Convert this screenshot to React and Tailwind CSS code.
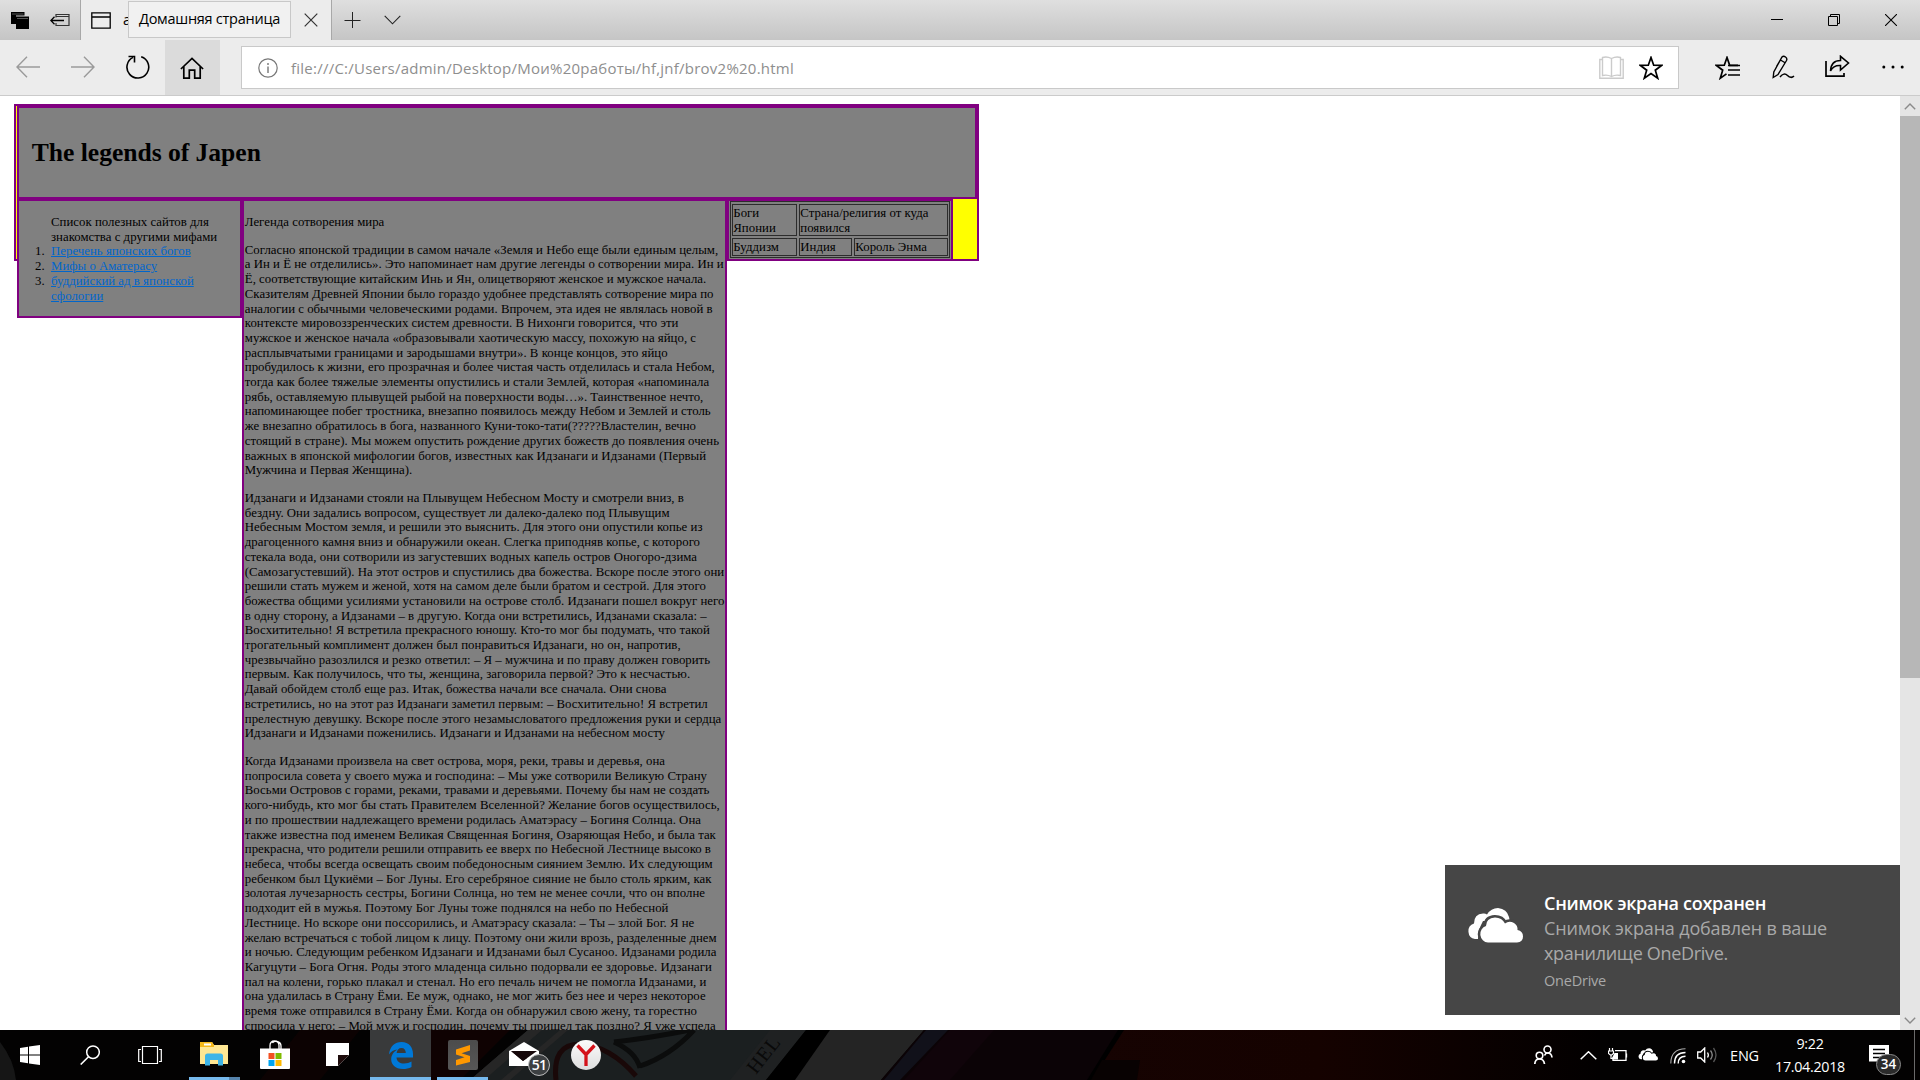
import React, { useLayoutEffect, useRef } from "react";

const UI = "font-['Open_Sans','Noto_Sans',sans-serif]";

/* Single line of text tracked so that it fills a given width. */
function Fit({ width, className = "", children }) {
  const ref = useRef(null);
  useLayoutEffect(() => {
    const el = ref.current;
    el.style.letterSpacing = "0px";
    const natural = el.getBoundingClientRect().width;
    el.style.letterSpacing = `${(width - natural) / el.textContent.length}px`;
  }, [width]);
  return (
    <span className={`block ${className}`}>
      <span ref={ref} className="inline-block whitespace-nowrap">{children}</span>
    </span>
  );
}

function Icon({ w, h, className = "", children }) {
  return (
    <svg width={w} height={h} viewBox={`0 0 ${w} ${h}`} fill="none" stroke="currentColor" strokeWidth="1.6" className={`block shrink-0 ${className}`}>
      {children}
    </svg>
  );
}

function TitleBar() {
  return (
    <div className="flex h-10 bg-linear-to-b from-[#dfdfdf] to-[#c5c5c5]">
      <div className="flex w-[81px] items-center border-r border-[#a8a8a8] pl-[11px]">
        <Icon w={18} h={18}>
          <path d="M0 1h13.500v3.500H5V13H0z" fill="#000" stroke="none" />
          <path d="M5 5.500h13V18H5z" fill="#000" stroke="none" />
          <path d="M6 7.500h11M1 3h11.500" stroke="#555" strokeWidth="1" />
        </Icon>
        <Icon w={20} h={14} className="ml-[21px]">
          <path d="M6 4.500V1.500h13V12.500H6V10" stroke="#333" strokeWidth="1.200" />
          <path d="M6 3.500h13" stroke="#333" strokeWidth="1" />
          <path d="M14 7.500H1M4.500 3.800L.8 7.500l3.700 3.700" strokeWidth="1.300" />
        </Icon>
      </div>
      <div className="relative flex w-[251px] items-center border-r border-[#a8a8a8] bg-[#ececec] pl-[10px]">
        <Icon w={20} h={17}>
          <path d="M.8.800h18.400v15.400H.8zM1 5h18" strokeWidth="1.300" />
        </Icon>
        <span className={`ml-3 text-[14.500px] ${UI}`}>а</span>
        <div className="absolute left-[47px] top-px flex h-[37px] w-[163px] items-center border border-[#c8c8c8] bg-[#f1f1f1] pl-[10px]">
          <Fit width={141} className={`-mt-px text-[14.500px] leading-5 text-black ${UI}`}>Домашняя страница</Fit>
        </div>
        <Icon w={14} h={14} className="ml-auto mr-[13px]">
          <path d="M.7.700l12.600 12.600M13.300.700L.7 13.300" stroke="#333" strokeWidth="1.200" />
        </Icon>
      </div>
      <Icon w={17} h={17} className="ml-3 mt-3">
        <path d="M8.500 0v16M.5 8.500h16" stroke="#222" strokeWidth="1" />
      </Icon>
      <Icon w={17} h={10} className="ml-[23px] mt-[15px]">
        <path d="M.7.800l7.800 8 7.800-8" stroke="#222" strokeWidth="1.100" />
      </Icon>
      <div className="ml-auto flex items-center pr-[23px]">
        <Icon w={12} h={12}><path d="M0 5.500h12" stroke="#000" strokeWidth="1" /></Icon>
        <Icon w={12} h={12} className="ml-[45px]"><path d="M.5 2.500h9v9h-9zM2.500 2.500v-2h9v9h-2" stroke="#000" strokeWidth="1" /></Icon>
        <Icon w={12} h={12} className="ml-[45px]"><path d="M0 0l12 12M12 0L0 12" stroke="#000" strokeWidth="1.100" /></Icon>
      </div>
    </div>
  );
}

const STAR = "M12 1.500l2.700 7.700 8.200.1-6.600 4.900 2.400 8L12 17.500l-6.700 4.700 2.400-8L1.100 9.300l8.200-.1z";

function ToolBar() {
  return (
    <div className="flex h-14 items-start border-b border-[#cbcbcb] bg-[#ececec] text-black">
      <Icon w={24} h={22} className="ml-4 mt-4 text-[#9a9a9a]">
        <path d="M11 .8L1 11l10 10.200M1 11h23" strokeWidth="1.400" />
      </Icon>
      <Icon w={24} h={22} className="ml-[31px] mt-4 text-[#9a9a9a]">
        <path d="M13 .8L23 11 13 21.200M23 11H0" strokeWidth="1.400" />
      </Icon>
      <Icon w={24} h={24} className="ml-[31px] mt-[15px]">
        <path d="M15.200 1.800A10.900 10.900 0 1 1 7 2.400" strokeWidth="1.600" />
        <path d="M2.500 1.500h6v6" strokeWidth="1.600" />
      </Icon>
      <div className="ml-[15px] flex h-[55px] w-[55px] bg-[#dbdbdb] pl-[15px] pt-[17px]">
        <Icon w={24} h={23}>
          <path d="M.9 12L12 1.500 23.100 12M3.800 9.500v11.700h5.500v-8h5.400v8h5.500V9.500" strokeWidth="1.700" />
        </Icon>
      </div>
      <div className="ml-[21px] mt-[6px] flex h-[43px] w-[1438px] items-center border border-[#c9c9c9] bg-white">
        <Icon w={20} h={20} className="ml-4 text-[#777]">
          <circle cx="10" cy="10" r="9.200" strokeWidth="1.200" />
          <path d="M10 8.500v6.500M10 5v2" strokeWidth="1.400" />
        </Icon>
        <Fit width={503} className={`ml-[13px] text-[15px] leading-5 text-[#8e8e8e] ${UI}`}>file:///C:/Users/admin/Desktop/Мои%20работы/hf,jnf/brov2%20.html</Fit>
        <Icon w={25} h={24} className="ml-auto text-[#cbcbcb]">
          <path d="M12.500 2.500Q8 .2 3.500 1.500v18q5-1.200 9 1 4-2.200 9-1v-18Q17 .2 12.500 2.500zM12.500 2.500v18.500M3.500 3.500H.8v18.700h23.400V3.500h-2.700" strokeWidth="1.400" />
        </Icon>
        <Icon w={24} h={24} className="ml-[15px] mr-[15px]"><path d={STAR} strokeWidth="1.700" /></Icon>
      </div>
      <Icon w={25} h={24} className="ml-9 mt-4">
        <path d="M23 9.300h-8.300L12 1.500l-2.700 7.700-8.200.1 6.600 4.900-2.400 8 6.200-4.300" strokeWidth="1.700" />
        <path d="M13 9.500h12M13 14h12M13 19h12" strokeWidth="1.600" />
      </Icon>
      <Icon w={23} h={24} className="ml-[32px] mt-[15px]">
        <path d="M1.200 22.500l.6-5.500L10 2q1.500-1.500 3.500 0t1 3.500L6 19.500z M8.500 5l5 3M4.500 11.500L9 4" strokeWidth="1.400" />
        <path d="M8 22q4-5 7.500-1.500T22 21" strokeWidth="1.500" />
      </Icon>
      <Icon w={25} h={23} className="ml-[30px] mt-[15px]">
        <path d="M1 6v15.200h18V18" strokeWidth="1.700" />
        <path d="M5.500 16Q6 5.500 15.500 5.500V1.300L23.500 8l-8 7v-4.500Q8.500 10 5.500 16z" strokeWidth="1.600" />
      </Icon>
      <Icon w={22} h={4} className="ml-[32px] mt-[25px]">
        <g fill="#000" stroke="none"><circle cx="1.800" cy="2" r="1.500" /><circle cx="11" cy="2" r="1.500" /><circle cx="20.200" cy="2" r="1.500" /></g>
      </Icon>
    </div>
  );
}

const STORY = [
  ["Легенда сотворения мира"],
  [
    "Согласно японской традиции в самом начале «Земля и Небо еще были единым целым,",
    "а Ин и Ё не отделились». Это напоминает нам другие легенды о сотворении мира. Ин и",
    "Ё, соответствующие китайским Инь и Ян, олицетворяют женское и мужское начала.",
    "Сказителям Древней Японии было гораздо удобнее представлять сотворение мира по",
    "аналогии с обычными человеческими родами. Впрочем, эта идея не являлась новой в",
    "контексте мировоззренческих систем древности. В Нихонги говорится, что эти",
    "мужское и женское начала «образовывали хаотическую массу, похожую на яйцо, с",
    "расплывчатыми границами и зародышами внутри». В конце концов, это яйцо",
    "пробудилось к жизни, его прозрачная и более чистая часть отделилась и стала Небом,",
    "тогда как более тяжелые элементы опустились и стали Землей, которая «напоминала",
    "рябь, оставляемую плывущей рыбой на поверхности воды…». Таинственное нечто,",
    "напоминающее побег тростника, внезапно появилось между Небом и Землей и столь",
    "же внезапно обратилось в бога, названного Куни-токо-тати(?????Властелин, вечно",
    "стоящий в стране). Мы можем опустить рождение других божеств до появления очень",
    "важных в японской мифологии богов, известных как Идзанаги и Идзанами (Первый",
    "Мужчина и Первая Женщина).",
  ],
  [
    "Идзанаги и Идзанами стояли на Плывущем Небесном Мосту и смотрели вниз, в",
    "бездну. Они задались вопросом, существует ли далеко-далеко под Плывущим",
    "Небесным Мостом земля, и решили это выяснить. Для этого они опустили копье из",
    "драгоценного камня вниз и обнаружили океан. Слегка приподняв копье, с которого",
    "стекала вода, они сотворили из загустевших водных капель остров Оногоро-дзима",
    "(Самозагустевший). На этот остров и спустились два божества. Вскоре после этого они",
    "решили стать мужем и женой, хотя на самом деле были братом и сестрой. Для этого",
    "божества общими усилиями установили на острове столб. Идзанаги пошел вокруг него",
    "в одну сторону, а Идзанами – в другую. Когда они встретились, Идзанами сказала: –",
    "Восхитительно! Я встретила прекрасного юношу. Кто-то мог бы подумать, что такой",
    "трогательный комплимент должен был понравиться Идзанаги, но он, напротив,",
    "чрезвычайно разозлился и резко ответил: – Я – мужчина и по праву должен говорить",
    "первым. Как получилось, что ты, женщина, заговорила первой? Это к несчастью.",
    "Давай обойдем столб еще раз. Итак, божества начали все сначала. Они снова",
    "встретились, но на этот раз Идзанаги заметил первым: – Восхитительно! Я встретил",
    "прелестную девушку. Вскоре после этого незамысловатого предложения руки и сердца",
    "Идзанаги и Идзанами поженились. Идзанаги и Идзанами на небесном мосту",
  ],
  [
    "Когда Идзанами произвела на свет острова, моря, реки, травы и деревья, она",
    "попросила совета у своего мужа и господина: – Мы уже сотворили Великую Страну",
    "Восьми Островов с горами, реками, травами и деревьями. Почему бы нам не создать",
    "кого-нибудь, кто мог бы стать Правителем Вселенной? Желание богов осуществилось,",
    "и по прошествии надлежащего времени родилась Аматэрасу – Богиня Солнца. Она",
    "также известна под именем Великая Священная Богиня, Озаряющая Небо, и была так",
    "прекрасна, что родители решили отправить ее вверх по Небесной Лестнице высоко в",
    "небеса, чтобы всегда освещать своим победоносным сиянием Землю. Их следующим",
    "ребенком был Цукиёми – Бог Луны. Его серебряное сияние не было столь ярким, как",
    "золотая лучезарность сестры, Богини Солнца, но тем не менее сочли, что он вполне",
    "подходит ей в мужья. Поэтому Бог Луны тоже поднялся на небо по Небесной",
    "Лестнице. Но вскоре они поссорились, и Аматэрасу сказала: – Ты – злой Бог. Я не",
    "желаю встречаться с тобой лицом к лицу. Поэтому они жили врозь, разделенные днем",
    "и ночью. Следующим ребенком Идзанаги и Идзанами был Сусаноо. Идзанами родила",
    "Кагуцути – Бога Огня. Роды этого младенца сильно подорвали ее здоровье. Идзанаги",
    "пал на колени, горько плакал и стенал. Но его печаль ничем не помогла Идзанами, и",
    "она удалилась в Страну Ёми. Ее муж, однако, не мог жить без нее и через некоторое",
    "время тоже отправился в Страну Ёми. Когда он обнаружил свою жену, та горестно",
    "спросила у него: – Мой муж и господин, почему ты пришел так поздно? Я уже успела",
  ],
];

const LINK = "text-[#0066cc] underline";

function Legends() {
  return (
    <div className="ml-[14px] mt-2 h-[157px] w-[965px] border-2 border-[#800080] bg-[#ffff00] pl-px font-['Liberation_Serif',serif] text-[12.800px] leading-[14.710px] tracking-[0.022px] text-black">
      <div className="h-[93px] w-[960px] border-2 border-[#800080] bg-[#808080] pl-[12.800px] pt-[30px]">
        <h1 className="text-[25.600px] font-bold leading-[30px] tracking-[-0.030px]">The legends of Japen</h1>
      </div>
      <div className="flex items-start">
        <div className="h-[119px] w-[225px] shrink-0 border-2 border-[#800080] bg-[#808080] pt-[14px]">
          <div className="pl-8">
            <div>Список полезных сайтов для</div>
            <div>знакомства с другими мифами</div>
          </div>
          <ol>
            <li className="flex"><span className="w-8 pl-4">1.</span><a className={LINK}>Перечень японских богов</a></li>
            <li className="flex"><span className="w-8 pl-4">2.</span><a className={LINK}>Мифы о Аматерасу</a></li>
            <li className="flex"><span className="w-8 pl-4">3.</span><a className={LINK}>буддийский ад в японской<br />сфологии</a></li>
          </ol>
        </div>
        <div className="h-[860px] w-[485px] shrink-0 border-2 border-[#800080] bg-[#808080] pl-[0.800px] pt-[0.800px]">
          {STORY.map((lines, i) => (
            <p key={i} className="mt-[13.100px]">
              {lines.map((line, j) => (
                <span key={j} className="block whitespace-nowrap">{line}</span>
              ))}
            </p>
          ))}
        </div>
        <div className="h-[62px] w-[226px] shrink-0 border-2 border-[#800080] bg-[#808080] pl-px">
          <div className="flex h-[57px] w-[220px] flex-col gap-[2px] border border-[#2c2c2c] pl-px pt-[2px]">
            <div className="flex gap-[2px]">
              <div className="h-8 w-[65px] border border-[#2c2c2c] pl-[0.300px] pt-px">Боги<br />Японии</div>
              <div className="h-8 w-[149px] border border-[#2c2c2c] pl-[0.300px] pt-px">Страна/религия от куда<br />появился</div>
            </div>
            <div className="flex gap-[2px]">
              <div className="h-[18px] w-[65px] border border-[#2c2c2c] pl-[0.300px] pt-px">Буддизм</div>
              <div className="h-[18px] w-[53px] border border-[#2c2c2c] pl-[0.300px] pt-px">Индия</div>
              <div className="h-[18px] w-[94px] border border-[#2c2c2c] pl-[0.300px] pt-px">Король Энма</div>
            </div>
          </div>
        </div>
      </div>
    </div>
  );
}

function Clouds({ w, h, gap }) {
  return (
    <svg width={w} height={h} viewBox="0 0 56 35" className="block shrink-0">
      <path d="M8 31A8 8 0 0 1 7 15.500Q7 6 16 5.500Q18 5 20 6.500Q24 0 31 0Q40 1 42 9Q43 12 42 13H16Q11 22 11 31z" fill="#fff" />
      <path d="M21 34.500a8.500 8.500 0 0 1-2-16.500Q19 10 28 9.500Q35 9.500 38 15.500Q42 12.500 47 15Q51 17.500 50.500 22Q56 23 56 28.500T50 34.500z" fill="#fff" stroke={gap} strokeWidth="5" paintOrder="stroke" />
    </svg>
  );
}

function Toast() {
  return (
    <div className={`absolute bottom-[15px] right-5 flex h-[150px] w-[455px] bg-[#464646] pl-[22px] ${UI}`}>
      <div className="pt-[43px]"><Clouds w={56} h={35} gap="#464646" /></div>
      <div className="ml-[21px] pt-[26px] text-[#a9a9a9]">
        <Fit width={222} className="text-[18px] font-semibold leading-[25px] text-white">Снимок экрана сохранен</Fit>
        <Fit width={283} className="text-[18px] leading-[25px]">Снимок экрана добавлен в ваше</Fit>
        <Fit width={184} className="text-[18px] leading-[25px]">хранилище OneDrive.</Fit>
        <Fit width={62} className="mt-1 text-[14.500px] leading-[22px]">OneDrive</Fit>
      </div>
    </div>
  );
}

function Wallpaper() {
  return (
    <svg width="1920" height="50" viewBox="0 0 1920 50" className="absolute inset-0">
      <defs>
        <linearGradient id="red" x1="0" x2="1">
          <stop offset="0" stopColor="#160302" />
          <stop offset=".45" stopColor="#150200" />
          <stop offset="1" stopColor="#020000" />
        </linearGradient>
      </defs>
      <path d="M0 0h1920v50H0z" fill="#030202" />
      <path d="M0 12Q14 30 16 50H0z" fill="#161616" />
      <path d="M300 0h60L320 50h-60z" fill="#0c0202" />
      <path d="M430 0h80L460 50h-60z" fill="#0f0202" />
      <path d="M528 0H806L766 50H470z" fill="#1b1f20" />
      <path d="M528 0h14L484 50h-14zM560 0h8L510 50h-9z" fill="#262626" />
      <path d="M556 50Q552 14 580 14Q610 16 636 46" fill="none" stroke="#190808" strokeWidth="5" />
      <path d="M614 12Q650 8 690 0M640 36Q670 26 694 0M614 12Q636 22 640 38" fill="none" stroke="#0b0c0c" strokeWidth="5" />
      <path d="M770 0h36L766 50h-36z" fill="#1f2122" />
      <path d="M806 0h24L795 50h-29z" fill="#000" />
      <path d="M830 0h94L881 50h-86z" fill="#242424" />
      <path d="M924 0h198L1089 50H881z" fill="#0b0306" />
      <path d="M926 0h22L900 50h-16z" fill="#11111a" />
      <path d="M950 0h44L950 50h-46z" fill="#10040a" />
      <path d="M1122 0H1600V50H1089z" fill="url(#red)" />
      <path d="M1118 0h6L1092 50h-5z" fill="#000" />
      <path d="M1102 30h38l-3 20h-46z" fill="#080202" />
      <text x="0" y="0" transform="translate(756 45) rotate(-52)" fontFamily="Liberation Serif, serif" fontSize="20" letterSpacing="1" fill="#090909">HEL</text>
    </svg>
  );
}

function TaskBar() {
  return (
    <div className={`relative h-[50px] bg-black text-white ${UI}`}>
      <Wallpaper />
      <div className="relative flex h-full">
        <div className="flex w-[60px] justify-center pt-[15px]">
          <Icon w={20} h={20}>
            <path d="M0 3l8-1.200V9.500H0zM9 1.600L20 0v9.500H9zM0 10.500h8v7.800L0 17zM9 10.500h11V20L9 18.400z" fill="#fff" stroke="none" />
          </Icon>
        </div>
        <div className="flex w-[60px] justify-center pt-[15px]">
          <Icon w={20} h={20}><circle cx="13" cy="7.200" r="6.300" strokeWidth="1.500" /><path d="M8.500 11.700L.7 19.500" strokeWidth="1.600" /></Icon>
        </div>
        <div className="flex w-[60px] justify-center pt-[15px]">
          <Icon w={24} h={20}><path d="M4.500 1.500h15v17h-15zM3 4.500H.7v12H3M21 4.500h2.300v12H21" strokeWidth="1.200" /></Icon>
        </div>
        <div className="ml-[9px] flex w-[51px] flex-col justify-between">
          <Icon w={28} h={24} className="ml-[11px] mt-3">
            <path d="M0 0h12l2 3h14v19H0z" fill="#ffe793" stroke="none" />
            <path d="M0 0h12l2 3v2H0z" fill="#f6b91a" stroke="none" />
            <path d="M4 1.500h7v2H4z" fill="#fff" stroke="none" />
            <path d="M5 23.500V14q0-2.500 2.500-2.500h13Q23 11.500 23 14v9.500h-5V18h-8v5.500z" fill="#3eb5e8" stroke="none" />
          </Icon>
          <div className="flex h-[3px] bg-[#76b9ed]"><div className="ml-auto w-[11px] bg-[#5684ac]" /></div>
        </div>
        <div className="flex w-[70px] justify-center pt-[10px]">
          <Icon w={30} h={30}>
            <path d="M0 8.500h30V28q0 1-1 1H1q-1 0-1-1z" fill="#fff" stroke="none" />
            <path d="M10 9V5.500Q10 1 14.500 1T19 5.500V9M12.500 3Q14 .8 17 1.500q4 1 4 4.500v3" strokeWidth="1.300" />
            <path d="M8.500 13h6v6h-6z" fill="#f25022" stroke="none" /><path d="M15.500 13h6v6h-6z" fill="#7fba00" stroke="none" />
            <path d="M8.500 20h6v6h-6z" fill="#00a4ef" stroke="none" /><path d="M15.500 20h6v6h-6z" fill="#ffb900" stroke="none" />
          </Icon>
        </div>
        <div className="flex w-[60px] pl-4 pt-[13px]">
          <Icon w={23} h={23}><path d="M0 0h23v12L12 23H0z" fill="#fff" stroke="none" /><path d="M12 12h11L12 23z" fill="#1d0b0b" stroke="none" /></Icon>
        </div>
        <div className="flex w-[61px] flex-col items-center justify-between bg-[#393a3b]">
          <Icon w={26} h={28} className="mt-[11px]">
            <path d="M1 13.500C2 5 7 1 13.500 1C21 1 25 6.500 25 13v3.500H8.500c.3 4 3.500 6 7.500 6 3 0 5.500-.8 7.500-2V26c-2.500 1.400-5.500 2-8.500 2C7 28 3.200 23 3.200 18.500c0-4.500 2.500-8 6.500-10C5.500 8.800 3 10.500 1 13.500zM8.600 12h9.200c0-3-1.500-5-4.300-5S9 9 8.600 12z" fill="#0078d7" stroke="none" />
          </Icon>
          <div className="h-[3px] w-full bg-[#76b9ed]" />
        </div>
        <div className="ml-[6px] flex w-[51px] flex-col items-center justify-between">
          <div className="mt-[10px] flex h-[30px] w-[30px] items-center justify-center rounded-[2px] bg-linear-to-b from-[#4c4c4c] to-[#575757]">
            <Icon w={16} h={22}>
              <path d="M1 5.500L15 1v5.500L6.500 9.200 15 12v6L1 21.500V16l8.500-2.700L1 10.500z" fill="#ff9800" stroke="none" />
            </Icon>
          </div>
          <div className="h-[3px] w-full bg-[#76b9ed]" />
        </div>
        <div className="relative ml-[21px] w-[62px] pt-[12px]">
          <Icon w={30} h={24}>
            <path d="M0 9L15 0l15 9v15H0z" fill="#fff" stroke="none" />
            <path d="M2 9h26L14 19z" fill="#16080a" stroke="none" /><path d="M2 9l12 10 4-3z" fill="#16080a" stroke="none" />
          </Icon>
          <div className="absolute left-[19px] top-6 flex h-[22px] w-[22px] items-center justify-center rounded-full border border-[#bdbdbd] bg-[#3d4042] text-[14px] font-semibold leading-none tracking-[-0.800px]">51</div>
        </div>
        <div className="mt-[10px] flex h-[30px] w-[30px] items-center justify-center rounded-full bg-linear-to-b from-[#fbfbfb] to-[#dedede]">
          <Icon w={20} h={22}><path d="M1.500 1.500L10 10.500l8.500-9M10 9.500V22" stroke="#d4121a" strokeWidth="3.300" /></Icon>
        </div>

        <div className="ml-auto flex">
          <Icon w={19} h={20} className="mt-[15px]">
            <circle cx="13.500" cy="4.500" r="3.500" /><circle cx="5.500" cy="10.500" r="3.300" />
            <path d="M.8 19q.3-5 4.700-5t5 5M10.500 10.500q1-2.500 3-2.500 4 0 4.500 4.500" strokeWidth="1.700" />
          </Icon>
          <Icon w={17} h={9} className="ml-[27px] mt-[21px]"><path d="M.7 8.300L8.500.8l7.800 7.500" strokeWidth="1.500" /></Icon>
          <Icon w={20} h={14} className="ml-[11px] mt-[18px]">
            <path d="M7 2.700h11v9.600H5V9M18.500 5.500v4" strokeWidth="1.300" /><path d="M6.500 5h3.500v6.500H4.500V9z" fill="#fff" stroke="none" />
            <path d="M1.500 0v3M4.500 0v3M.5 3h5v2.500L3 7.500.5 5.500zM3 7v3.500h2" strokeWidth="1.200" />
          </Icon>
          <div className="ml-[10px] mt-[18px]"><Clouds w={20} h={13} gap="#000" /></div>
          <Icon w={16} h={16} className="ml-3 mt-[18px]">
            <path d="M.8 15.500Q.8 1 15.500.8" stroke="#aaa" strokeWidth="1.100" />
            <path d="M4.500 15.500Q4.500 4.500 15.500 4.500M8.200 15.500Q8.200 8.200 15.500 8.200" strokeWidth="1.400" />
            <circle cx="13.500" cy="13.500" r="1.800" fill="#fff" stroke="none" />
          </Icon>
          <Icon w={21} h={16} className="ml-[11px] mt-[17px]">
            <path d="M.7 5v6h3l4 4V1L3.700 5z" strokeWidth="1.300" /><path d="M10.500 5.500q1.700 2.500 0 5" strokeWidth="1.300" />
            <path d="M13.500 3.500q3.500 4.500 0 9" stroke="#888" strokeWidth="1.300" /><path d="M16.500 1q5 7 0 14" stroke="#555" strokeWidth="1.300" />
          </Icon>
          <Fit width={29} className="ml-3 mt-[16px] text-[14.500px] leading-5">ENG</Fit>
          <div className="ml-[16px] flex w-[70px] flex-col items-center pt-[3px]">
            <Fit width={27} className="text-[14.300px] leading-[22px]">9:22</Fit>
            <Fit width={70} className="text-[14.300px] leading-[23px]">17.04.2018</Fit>
          </div>
          <div className="relative ml-[24px] w-[45px] pt-[15px]">
            <Icon w={20} h={20}>
              <path d="M0 0h20v16.500h-7l-4 3.500v-3.500H0z" fill="#fff" stroke="none" /><path d="M4 4.500h12M4 8.500h12M4 12.500h8" stroke="#000" strokeWidth="1.300" />
            </Icon>
            <div className="absolute left-[7px] top-6 flex h-[21px] w-[25px] items-center justify-center rounded-full border border-[#8a8a8a] bg-[#2b2b2b] text-[13.500px] font-semibold leading-none">34</div>
          </div>
          <div className="w-[6px] border-l border-[#6a6a6a]" />
        </div>
      </div>
    </div>
  );
}

export default function App() {
  return (
    <div className="flex h-[1080px] w-[1920px] flex-col overflow-hidden bg-white">
      <TitleBar />
      <ToolBar />
      <div className="relative flex h-[934px] overflow-hidden">
        <main className="h-full flex-1 overflow-hidden"><Legends /></main>
        <div className="flex w-5 flex-col bg-[#e5e5e5] text-[#8a8a8a]">
          <Icon w={12} h={7} className="mx-auto mb-[6px] mt-[7px]"><path d="M.8 6.200L6 1l5.200 5.200" strokeWidth="1.400" /></Icon>
          <div className="h-[562px] bg-[#b7b7b7]" />
          <Icon w={12} h={7} className="mx-auto mb-[6px] mt-auto"><path d="M.8.800L6 6 11.200.8" strokeWidth="1.400" /></Icon>
        </div>
        <Toast />
      </div>
      <TaskBar />
    </div>
  );
}
